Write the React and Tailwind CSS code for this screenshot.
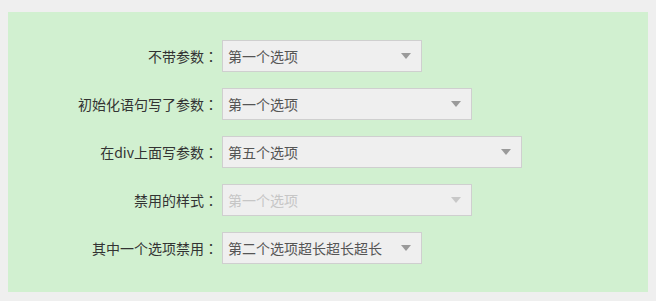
import React from "react";

const rows = [
  { label: "不带参数", value: "第一个选项", width: "w-[200px]" },
  { label: "初始化语句写了参数", value: "第一个选项", width: "w-[250px]" },
  { label: "在div上面写参数", value: "第五个选项", width: "w-[300px]" },
  { label: "禁用的样式", value: "第一个选项", width: "w-[250px]", disabled: true },
  { label: "其中一个选项禁用", value: "第二个选项超长超长超长", width: "w-[200px]" },
];

function Select({ value, width, disabled }) {
  return (
    <div
      className={
        width +
        " h-8 flex items-center justify-between border border-[#cfcfcf] bg-[#efefef] pl-[5px] pr-[10px] " +
        (disabled ? "text-[#c6c6c6]" : "text-[#555555]")
      }
    >
      <span className="whitespace-nowrap">{value}</span>
      <span
        className={
          "w-0 h-0 border-x-[5px] border-t-[6px] border-x-transparent " +
          (disabled ? "border-t-[#c8c8c8]" : "border-t-[#9a9a9a]")
        }
      />
    </div>
  );
}

export default function App() {
  return (
    <div className="w-[656px] h-[301px] bg-[#efefef] pt-3 pl-2">
      <div
        className="w-[640px] h-[280px] bg-[#d1f0d0] pt-[28px] flex flex-col gap-4 text-[14px] text-[#333333]"
        style={{ fontFamily: '"Noto Sans CJK SC", "Noto Sans", sans-serif' }}
      >
        {rows.map((row) => (
          <div key={row.label} className="flex items-center">
            <label className="w-[210px] text-right whitespace-nowrap">
              {row.label}
              <span className="font-['Noto_Sans_CJK_TC',sans-serif]">：</span>
            </label>
            <div className="ml-1">
              <Select value={row.value} width={row.width} disabled={row.disabled} />
            </div>
          </div>
        ))}
      </div>
    </div>
  );
}
